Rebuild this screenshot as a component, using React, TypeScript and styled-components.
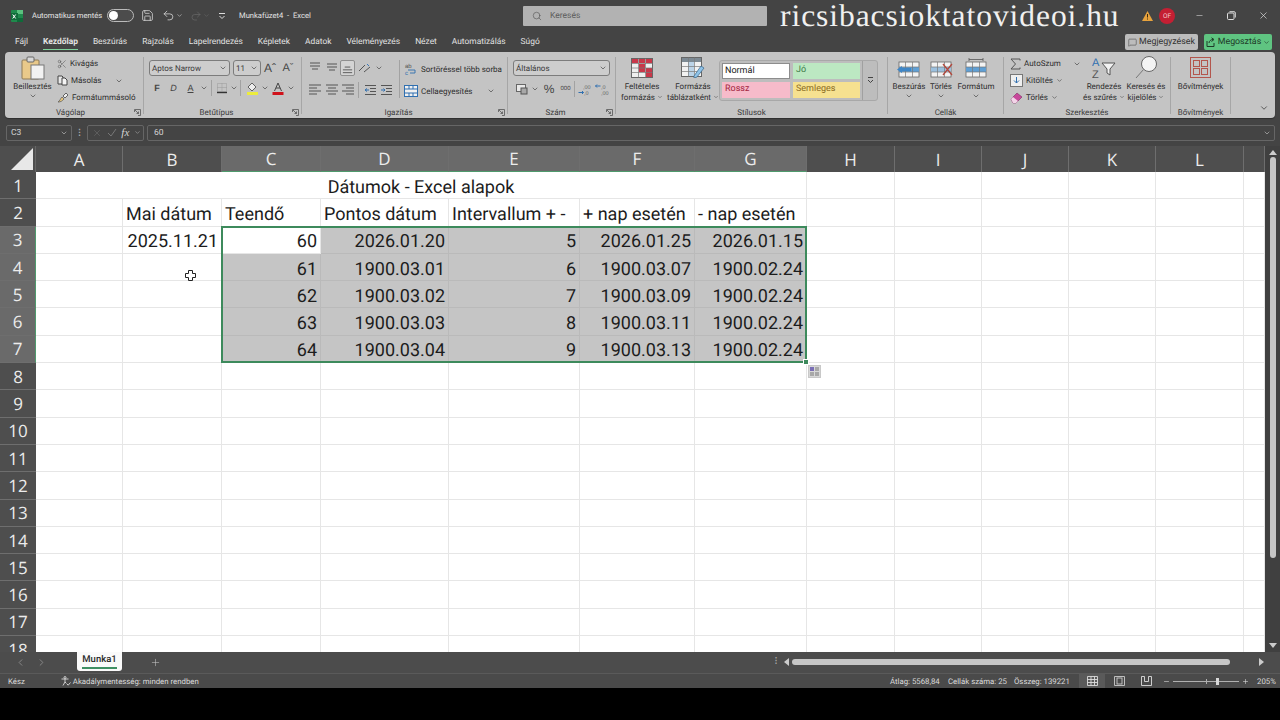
import React from "react";
import styled, { createGlobalStyle } from "styled-components";
import {
  ChevronDown,
  ChevronLeft,
  ChevronRight,
  Minus,
  MessageSquare,
  Plus,
  Redo2,
  Save,
  Scissors,
  Search,
  Undo2,
  X,
} from "lucide-react";

const UI = `Roboto, "Noto Sans", sans-serif`;
const HEAD = `"Open Sans", "Noto Sans", sans-serif`;

const GlobalStyle = createGlobalStyle`
  html, body { margin: 0; padding: 0; background: #000; }
  * { box-sizing: border-box; }
  body { text-rendering: geometricPrecision; }
`;

const Page = styled.div`
  width: 1280px;
  height: 720px;
  background: #000;
  overflow: hidden;
  font-family: ${UI};
`;
const Window = styled.div`
  height: 688px;
  background: #444;
  display: flex;
  flex-direction: column;
`;

/* title bar */
const TitleBar = styled.div`
  height: 31px;
  display: flex;
  align-items: center;
  color: #e4e4e4;
  font-size: 7.6px;
  flex: none;
`;
const TitleItem = styled.div<{ $ml?: number; $w?: number }>`
  margin-left: ${(p) => p.$ml ?? 0}px;
  ${(p) => (p.$w ? `width: ${p.$w}px;` : "")}
  display: flex;
  align-items: center;
  flex: none;
  white-space: nowrap;
`;
const Toggle = styled.div`
  margin-left: 6px;
  width: 27px;
  height: 13px;
  border: 1px solid #bbb;
  border-radius: 7px;
  background: #4c4c4c;
  padding: 1px;
  flex: none;
`;
const ToggleKnob = styled.div`
  width: 9px;
  height: 9px;
  border-radius: 50%;
  background: #fff;
`;
const SearchBox = styled.div`
  margin-left: 210px;
  width: 244px;
  height: 20px;
  background: #b2b2b2;
  border-radius: 1px;
  display: flex;
  align-items: center;
  padding-left: 9px;
  gap: 8px;
  color: #5c5c5c;
  flex: none;
  font-size: 8.5px;
`;
const Watermark = styled.div`
  margin-left: 13px;
  font-family: "Liberation Serif", serif;
  font-size: 31.5px;
  letter-spacing: 0.95px;
  line-height: 31px;
  color: #f0f0f0;
  white-space: nowrap;
  flex: none;
`;
const Avatar = styled.div`
  width: 16px;
  height: 16px;
  border-radius: 50%;
  background: #c41f33;
  color: #f3c6cc;
  font-size: 6.5px;
  display: flex;
  align-items: center;
  justify-content: center;
  margin-left: 6.5px;
  flex: none;
`;

/* tabs */
const TabRow = styled.div`
  height: 21px;
  display: flex;
  align-items: center;
  padding-left: 15px;
  gap: 15px;
  flex: none;
  color: #e2e2e2;
  font-size: 8.4px;
`;
const Tab = styled.div<{ $active?: boolean }>`
  height: 21px;
  line-height: 23px;
  white-space: nowrap;
  font-weight: ${(p) => (p.$active ? 700 : 400)};
  position: relative;
  ${(p) =>
    p.$active
      ? `&::after { content: ""; position: absolute; left: 0; right: 0; bottom: 2px; height: 1.5px; background: #7fd29b; }`
      : ""}
`;
const TabActions = styled.div`
  margin-left: auto;
  margin-right: 8px;
  margin-top: 1px;
  display: flex;
  gap: 6px;
`;
const CommentButton = styled.div`
  width: 73px;
  height: 16px;
  background: #bcbcbc;
  border-radius: 2px;
  color: #333;
  display: flex;
  align-items: center;
  justify-content: center;
  gap: 2px;
  font-size: 8.8px;
`;
const ShareButton = styled(CommentButton)`
  width: 68px;
  background: #5fc481;
  color: #1e3a28;
`;

/* ribbon */
const Ribbon = styled.div`
  height: 66px;
  margin: 0 5px;
  background: #c4c4c4;
  border-radius: 4px;
  display: flex;
  padding-top: 3px;
  color: #2e2e2e;
  font-size: 8px;
  flex: none;
  box-shadow: 0 1px 1px #2e2e2e;
`;
const Group = styled.div<{ $w: number }>`
  width: ${(p) => p.$w}px;
  display: flex;
  flex-direction: column;
  flex: none;
`;
const GroupBody = styled.div<{ $pl?: number }>`
  height: 51px;
  display: flex;
  padding-left: ${(p) => p.$pl ?? 0}px;
`;
const GroupFoot = styled.div<{ $pl?: number }>`
  height: 12px;
  display: flex;
  align-items: center;
  padding-top: 1px;
  padding-left: ${(p) => p.$pl ?? 0}px;
  color: #3a3a3a;
  font-size: 8px;
`;
const GroupName = styled.div`
  flex: 1;
  text-align: center;
`;
const Launcher = styled.div`
  width: 12px;
  height: 8px;
  display: flex;
  justify-content: center;
  align-items: center;
`;
const GroupSep = styled.div`
  width: 1px;
  margin: 2px 0 4px;
  background: #a6a6a6;
  flex: none;
`;
const SmallCol = styled.div<{ $w: number; $ml?: number }>`
  width: ${(p) => p.$w}px;
  margin-left: ${(p) => p.$ml ?? 0}px;
  display: flex;
  flex-direction: column;
  flex: none;
`;
const SmallRow = styled.div<{ $h?: number; $mt?: number }>`
  height: ${(p) => p.$h ?? 17.5}px;
  margin-top: ${(p) => p.$mt ?? 0}px;
  display: flex;
  align-items: center;
  gap: 3px;
  white-space: nowrap;
`;
const RowChevron = styled.div<{ $ml: number }>`
  margin-left: ${(p) => p.$ml}px;
  display: flex;
`;
const BigButton = styled.div<{ $w: number }>`
  width: ${(p) => p.$w}px;
  flex: none;
  display: flex;
  flex-direction: column;
  align-items: center;
  line-height: 11px;
  text-align: center;
  white-space: nowrap;
`;
const BigIcon = styled.div<{ $h?: number }>`
  height: ${(p) => p.$h ?? 25}px;
  margin-bottom: 1px;
  display: flex;
  align-items: center;
  justify-content: center;
`;
const ControlStack = styled.div`
  display: flex;
  flex-direction: column;
  flex: none;
`;
const IconRow = styled.div<{ $mt?: number; $h?: number }>`
  display: flex;
  align-items: center;
  height: ${(p) => p.$h ?? 18}px;
  margin-top: ${(p) => p.$mt ?? 0}px;
`;
const Slot = styled.div<{ $w: number; $active?: boolean }>`
  width: ${(p) => p.$w}px;
  height: 16px;
  display: flex;
  align-items: center;
  justify-content: center;
  flex: none;
  ${(p) =>
    p.$active
      ? "background: #d4d4d4; border: 1px solid #8f8f8f; border-radius: 2px;"
      : ""}
`;
const VSep = styled.div<{ $mx?: number; $h?: number; $mt?: number }>`
  width: 1px;
  height: ${(p) => p.$h ?? 16}px;
  background: #a2a2a2;
  margin: ${(p) => p.$mt ?? 0}px ${(p) => p.$mx ?? 2}px 0;
  flex: none;
`;
const Select = styled.div<{ $w: number; $ml?: number }>`
  width: ${(p) => p.$w}px;
  margin-left: ${(p) => p.$ml ?? 0}px;
  height: 16px;
  border: 1px solid #7c7c7c;
  border-radius: 3px;
  background: #cdcdcd;
  display: flex;
  align-items: center;
  justify-content: space-between;
  padding: 0 2px;
  flex: none;
  color: #3a3a3a;
`;
const BoldLetter = styled.span<{ $b?: boolean; $i?: boolean; $u?: boolean; $size?: number }>`
  font-family: "Liberation Sans", sans-serif;
  font-size: ${(p) => p.$size ?? 9}px;
  font-weight: ${(p) => (p.$b ? 700 : 400)};
  font-style: ${(p) => (p.$i ? "italic" : "normal")};
  text-decoration: ${(p) => (p.$u ? "underline" : "none")};
  color: #444;
`;
const Gallery = styled.div`
  width: 159px;
  height: 41px;
  background: #bdbdbd;
  border: 1px solid #a8a8a8;
  border-radius: 3px;
  margin-top: 5px;
  padding: 2px 0 0 2px;
  display: flex;
  flex: none;
`;
const StyleGrid = styled.div`
  display: grid;
  grid-template-columns: 68px 67px;
  grid-auto-rows: 16px;
  gap: 3px 3px;
  width: 141px;
`;
const StyleCell = styled.div<{ $bg: string; $fg: string; $outlined?: boolean }>`
  background: ${(p) => p.$bg};
  color: ${(p) => p.$fg};
  font-size: 9px;
  padding-left: 3px;
  line-height: 15px;
  ${(p) => (p.$outlined ? "border: 1px solid #8d8d8d; padding-left: 2px;" : "")}
`;
const GalleryScroll = styled.div`
  margin: -2px 0 0 0;
  width: 15px;
  border-left: 1px solid #a0a0a0;
  display: flex;
  align-items: center;
  justify-content: center;
`;
const RibbonEnd = styled.div`
  flex: 1;
  display: flex;
  justify-content: flex-end;
  align-items: flex-end;
  padding: 0 6px 5px 0;
`;

/* formula bar */
const FormulaBar = styled.div`
  height: 17px;
  margin-top: 6px;
  display: flex;
  padding: 0 5px 0 6px;
  align-items: center;
  color: #d6d6d6;
  font-size: 8.5px;
  flex: none;
`;
const NameBox = styled.div`
  width: 66px;
  height: 16px;
  border: 1px solid #666;
  border-radius: 2px;
  display: flex;
  align-items: center;
  justify-content: space-between;
  padding: 0 3px 0 4px;
  flex: none;
`;
const FormulaDots = styled.div`
  width: 15px;
  text-align: center;
  flex: none;
  font-weight: 700;
  color: #aaa;
`;
const FxBox = styled(NameBox)`
  width: 57px;
  padding: 0 2px 0 4px;
  color: #777;
`;
const FxLabel = styled.span`
  font-family: "Liberation Serif", serif;
  font-style: italic;
  font-size: 11px;
  color: #d8d8d8;
`;
const FormulaInput = styled(NameBox)`
  flex: 1;
  width: auto;
  margin-left: 3px;
  padding: 0 3px 0 6px;
`;

/* sheet */
const SheetArea = styled.div`
  height: 506px;
  margin-top: 5px;
  display: flex;
  flex: none;
`;
const GridWrap = styled.div`
  width: 1265px;
  height: 506px;
  position: relative;
  overflow: hidden;
  background: #fff;
  flex: none;
`;
const CellGrid = styled.div<{ $cols: string; $rowH: number }>`
  display: grid;
  grid-template-columns: ${(p) => p.$cols};
  grid-template-rows: 26px;
  grid-auto-rows: ${(p) => p.$rowH}px;
  font-family: Roboto, "Liberation Sans", sans-serif;
  font-size: 18px;
  color: #1c1c1c;
`;
const Corner = styled.div`
  background: #4e4e4e;
  border-right: 1px solid #666;
  display: flex;
  align-items: flex-end;
  justify-content: flex-end;
  padding: 0 2px 2px 0;
`;
const Header = styled.div<{ $sel?: boolean }>`
  background: ${(p) => (p.$sel ? "#6a6a6a" : "#4e4e4e")};
  color: #ececec;
  font-family: ${HEAD};
  font-size: 17px;
  display: flex;
  align-items: center;
  justify-content: center;
`;
const ColHeader = styled(Header)`
  border-right: 1px solid #6e6e6e;
  ${(p) => (p.$sel ? "border-bottom: 1px solid #4f9a6d;" : "")}
`;
const RowHeader = styled(Header)`
  border-bottom: 1px solid #6e6e6e;
  ${(p) => (p.$sel ? "border-right: 1px solid #4f9a6d;" : "")}
`;
const Cell = styled.div<{ $sel?: boolean; $right?: boolean; $span?: number; $center?: boolean }>`
  ${(p) => (p.$span ? `grid-column: span ${p.$span};` : "")}
  background: ${(p) => (p.$sel ? "#c5c5c5" : "#fff")};
  border-right: 1px solid ${(p) => (p.$sel ? "#bababa" : "#e6e6e6")};
  border-bottom: 1px solid ${(p) => (p.$sel ? "#bababa" : "#e6e6e6")};
  display: flex;
  align-items: center;
  justify-content: ${(p) => (p.$center ? "center" : p.$right ? "flex-end" : "flex-start")};
  padding: 4px 3px 0;
  white-space: nowrap;
  overflow: visible;
`;
const Selection = styled.div`
  position: absolute;
  border: 2px solid #3d8a5c;
  pointer-events: none;
`;
const FillHandle = styled.div`
  position: absolute;
  right: -4px;
  bottom: -4px;
  width: 6px;
  height: 6px;
  background: #3d8a5c;
  border: 1px solid #fff;
`;
const QuickAnalysis = styled.div`
  position: absolute;
  left: 808px;
  top: 219px;
  width: 13px;
  height: 13px;
  background: #d8d8d8;
  border: 1px solid #c8c8c8;
  display: flex;
  align-items: center;
  justify-content: center;
`;
const CursorMark = styled.div`
  position: absolute;
  left: 185px;
  top: 124px;
  width: 11px;
  height: 11px;
  display: flex;
`;
const VScroll = styled.div`
  width: 15px;
  background: #404040;
  display: flex;
  flex-direction: column;
  align-items: center;
  padding-top: 4px;
  flex: none;
`;
const VThumb = styled.div`
  width: 6px;
  height: 401px;
  margin-top: 2px;
  background: #c6c6c6;
  border-radius: 3px;
`;
const VDown = styled.div`
  margin-top: auto;
  margin-bottom: 4px;
  display: flex;
`;

/* sheet tabs */
const SheetTabs = styled.div`
  height: 21px;
  background: #4c4c4c;
  display: flex;
  align-items: flex-start;
  color: #9a9a9a;
  flex: none;
`;
const NavArrows = styled.div`
  width: 77px;
  height: 20px;
  padding-left: 15px;
  display: flex;
  align-items: center;
  gap: 10px;
  flex: none;
`;
const SheetTab = styled.div`
  width: 45px;
  height: 19px;
  background: #fafafa;
  border-radius: 0 0 3px 3px;
  color: #2a2a2a;
  font-size: 9.5px;
  font-weight: 500;
  text-align: center;
  line-height: 16px;
  position: relative;
  flex: none;
  &::after {
    content: "";
    position: absolute;
    left: 5px;
    right: 5px;
    bottom: 2px;
    height: 2px;
    background: #3f8f63;
  }
`;
const AddSheet = styled.div`
  margin-left: 28px;
  height: 20px;
  display: flex;
  align-items: center;
  flex: none;
`;
const TabSplitter = styled.div`
  margin-left: 609px;
  width: 12px;
  height: 20px;
  color: #aaa;
  font-size: 8px;
  text-align: center;
  line-height: 18px;
  font-weight: 700;
  flex: none;
`;
const HScroll = styled.div`
  width: 490px;
  height: 20px;
  display: flex;
  align-items: center;
  padding-left: 2px;
  flex: none;
`;
const HThumb = styled.div`
  width: 438px;
  height: 6px;
  margin-left: 3px;
  background: #c6c6c6;
  border-radius: 3px;
  flex: none;
`;
const HRight = styled.div`
  margin-left: 29px;
  display: flex;
`;

/* status bar */
const StatusBar = styled.div`
  height: 15px;
  background: #4a4a4a;
  border-top: 1px solid #5a5a5a;
  display: flex;
  align-items: center;
  color: #dcdcdc;
  font-size: 7.8px;
  padding: 0 5px 0 8px;
  flex: none;
  white-space: nowrap;
`;
const StatusItem = styled.div<{ $ml?: number; $w?: number }>`
  margin-left: ${(p) => p.$ml ?? 0}px;
  ${(p) => (p.$w ? `width: ${p.$w}px;` : "")}
  display: flex;
  flex: none;
`;
const StatusRight = styled.div`
  margin-left: auto;
  display: flex;
  align-items: center;
  flex: none;
`;
const ViewButton = styled.div<{ $active?: boolean }>`
  margin-right: 1px;
  width: 26px;
  height: 14px;
  display: flex;
  align-items: center;
  justify-content: center;
  flex: none;
  ${(p) => (p.$active ? "background: #5a5a5a;" : "")}
`;
const ZoomTrack = styled.div`
  width: 66px;
  height: 1px;
  background: #b0b0b0;
  position: relative;
  margin: 0 3px;
  flex: none;
`;
const ZoomTick = styled.div`
  position: absolute;
  left: 33px;
  top: -2px;
  width: 1px;
  height: 5px;
  background: #b0b0b0;
`;
const ZoomThumb = styled.div`
  position: absolute;
  left: 43px;
  top: -3px;
  width: 3px;
  height: 7px;
  background: #d8d8d8;
`;

/* drawings */
const Chev = ({ c = "#444", s = 8 }: { c?: string; s?: number }) => (
  <ChevronDown size={s} color={c} strokeWidth={2} />
);

const ExcelLogo = () => (
  <svg width="12" height="12" viewBox="0 0 12 12">
    <rect width="12" height="12" rx="1" fill="#1f8a4c" />
    <rect x="6" width="6" height="4" fill="#5bc27f" />
    <rect x="6" y="8" width="6" height="4" fill="#0f6a39" />
    <rect y="3" width="7" height="7" fill="#106c3a" />
    <path d="M1.7 4.5l3 4M4.7 4.5l-3 4" stroke="#fff" strokeWidth="1" />
  </svg>
);
const PasteIcon = () => (
  <svg width="28" height="24" viewBox="0 0 28 24">
    <rect x="3" y="4" width="17" height="19" rx="1" fill="#e9c98a" stroke="#8d7a58" />
    <rect x="8" y="1" width="7" height="5" rx="1" fill="#d8d8d8" stroke="#666" />
    <rect x="12" y="9" width="13" height="14" fill="#f2f2f2" stroke="#777" />
  </svg>
);
const CopyIcon = () => (
  <svg width="11" height="11" viewBox="0 0 11 11" fill="none" stroke="#444">
    <path d="M1 1h4l1 1v7H1z" fill="#e8e8e8" />
    <path d="M5 3h3l2 2v5H5z" fill="#f4f4f4" />
  </svg>
);
const BrushIcon = () => (
  <svg width="12" height="11" viewBox="0 0 12 11">
    <path d="M1 10c2-1 2-3 4-5l2 2c-2 2-3 3-6 3z" fill="#e8c77c" stroke="#555" strokeWidth=".7" />
    <path d="M6 4l3-3 2 2-3 3z" fill="#f0f0f0" stroke="#444" strokeWidth=".8" />
  </svg>
);
const BorderIcon = () => (
  <svg width="12" height="12" viewBox="0 0 12 12" fill="none" stroke="#9a9a9a">
    <path d="M1.5 1.5h9v8h-9zM6 1.5v8M1.5 5.5h9" strokeDasharray="1 1" />
    <path d="M1 10.5h10" stroke="#333" strokeWidth="1.4" />
  </svg>
);
const FillIcon = () => (
  <svg width="13" height="13" viewBox="0 0 13 13">
    <path d="M6 1l4 4-4 4-4-4z" fill="#eee" stroke="#444" strokeWidth=".8" />
    <rect x="1" y="10" width="11" height="3" fill="#ecec3c" />
  </svg>
);
const FontColorIcon = () => (
  <svg width="12" height="13" viewBox="0 0 12 13">
    <path d="M2.5 9L6 1l3.5 8M4 6h4" fill="none" stroke="#444" />
    <rect x="0.5" y="10" width="11" height="3" fill="#d0121b" />
  </svg>
);
const Lines = ({ kind }: { kind: "top" | "mid" | "bot" | "l" | "c" | "r" }) => {
  const d = {
    top: "M2 2h10M2 5h10M4 8h6",
    mid: "M2 3h10M2 6h10M4 9h6",
    bot: "M4 6h6M2 9h10M2 12h10",
    l: "M1 2h12M1 5h8M1 8h12M1 11h8",
    c: "M1 2h12M3 5h8M1 8h12M3 11h8",
    r: "M1 2h12M5 5h8M1 8h12M5 11h8",
  }[kind];
  return (
    <svg width="14" height="14" viewBox="0 0 14 14" fill="none" stroke="#555" strokeWidth="1">
      <path d={d} />
    </svg>
  );
};
const OrientIcon = () => (
  <svg width="13" height="12" viewBox="0 0 13 12" fill="none" stroke="#555">
    <path d="M1 9l6-6M6 10l6-5" />
    <path d="M9 2l2 2" stroke="#3a78b8" />
  </svg>
);
const IndentIcon = ({ out }: { out?: boolean }) => (
  <svg width="13" height="12" viewBox="0 0 13 12" fill="none" stroke="#555">
    <path d="M1 1.5h11M6 4.5h6M6 7.5h6M1 10.5h11" />
    <path d={out ? "M5 6H1m2-1.5L1 6l2 1.5" : "M1 6h4M3.5 4.5L5 6 3.5 7.5"} stroke="#2f6fb0" />
  </svg>
);
const WrapIcon = () => (
  <svg width="14" height="14" viewBox="0 0 14 14">
    <text x="1" y="6" fontSize="6" fill="#555" fontFamily="Liberation Sans">ab</text>
    <text x="1" y="13" fontSize="6" fill="#2f6fb0" fontFamily="Liberation Sans">c</text>
    <path d="M6 11h5V8H4" fill="none" stroke="#2f6fb0" strokeWidth=".9" />
  </svg>
);
const MergeIcon = () => (
  <svg width="14" height="12" viewBox="0 0 14 12" fill="#f0f0f0" stroke="#2f6fb0">
    <rect x=".5" y=".5" width="13" height="11" />
    <path d="M.5 4h13M.5 8h13M5 .5V4M9 .5V4M5 8v3.5M9 8v3.5" fill="none" />
  </svg>
);
const MoneyIcon = () => (
  <svg width="13" height="12" viewBox="0 0 13 12" fill="none" stroke="#666">
    <rect x=".5" y="1.5" width="9" height="7" fill="#e8e8e8" />
    <rect x="5" y="5" width="6" height="6" fill="#a8a8a8" stroke="#555" />
  </svg>
);
const DecimalIcon = ({ dec }: { dec?: boolean }) => (
  <svg width="14" height="13" viewBox="0 0 14 13">
    <text x={dec ? 5 : 6} y="5.5" fontSize="5.5" fill="#666" fontFamily="Liberation Sans">{dec ? ",00" : ",0"}</text>
    <text x="6" y="12" fontSize="5.5" fill="#666" fontFamily="Liberation Sans">{dec ? ",0" : ",00"}</text>
    <path d={dec ? "M0.5 9.5h5m-1.5-1.5l1.5 1.5L4 11" : "M5.5 3h-5M2 1.5L.5 3 2 4.5"} stroke="#2f6fb0" fill="none" />
  </svg>
);
const CondFormatIcon = () => (
  <svg width="22" height="20" viewBox="0 0 22 20">
    <rect x=".5" y=".5" width="21" height="19" fill="#efefef" stroke="#666" />
    <rect x="1" y="1" width="6" height="4" fill="#c8384a" />
    <rect x="8" y="1" width="6" height="4" fill="#c8384a" />
    <rect x="15" y="1" width="6" height="4" fill="#c8384a" />
    <rect x="8" y="6" width="6" height="8" fill="#c8384a" />
    <rect x="15" y="10" width="6" height="9" fill="#c8384a" />
    <path d="M.5 5.5h21M.5 10h21M.5 14.5h21M7.500.5v19M14.500.5v19" stroke="#777" fill="none" strokeWidth=".7" />
  </svg>
);
const TableFormatIcon = () => (
  <svg width="24" height="21" viewBox="0 0 24 21">
    <rect x=".5" y=".5" width="20" height="19" fill="#f2f2f2" stroke="#666" />
    <rect x="1" y="1" width="19" height="4" fill="#7d8a94" />
    <rect x="7" y="5" width="6" height="14" fill="#bcd4e8" />
    <path d="M.5 9.500h20M.5 14.500h20M7.500.5v19M13.500.5v19" stroke="#7a7a7a" fill="none" strokeWidth=".7" />
    <path d="M13 19l7-10 3 2-7 9-3 1z" fill="#8fc3e8" stroke="#36648a" strokeWidth=".7" />
  </svg>
);
const CellsIcon = ({ variant }: { variant: "ins" | "del" | "fmt" }) => (
  <svg width="24" height="22" viewBox="0 0 24 22">
    <g transform="translate(2 5)">
      <rect width="20" height="15" fill="#f3f3f3" stroke="#666" strokeWidth=".8" />
      <rect y="5" width="20" height="5" fill={variant === "del" ? "#9cc0de" : "#5f9fd4"} />
      <path d="M0 5h20M0 10h20M6.500 0v15M13.500 0v15" stroke="#777" strokeWidth=".7" fill="none" />
    </g>
    {variant === "ins" && <path d="M0 12.500L5 9v2h9v3H5v2z" fill="#3f86c6" />}
    {variant === "del" && <path d="M14 7l9 11M23 7l-9 11" stroke="#b3483d" strokeWidth="1.3" />}
    {variant === "fmt" && <path d="M5 2.500h14M5 1v3M19 1v3" stroke="#555" strokeWidth=".8" />}
  </svg>
);
const SigmaIcon = () => (
  <svg width="11" height="12" viewBox="0 0 11 12" fill="none" stroke="#555">
    <path d="M10 2.500V1H1l4.500 5L1 11h9V9.500" />
  </svg>
);
const FillDownIcon = () => (
  <svg width="13" height="13" viewBox="0 0 13 13">
    <rect x=".5" y=".5" width="12" height="12" fill="#efefef" stroke="#777" />
    <path d="M6.500 3v6M4 6.500L6.500 9 9 6.500" fill="none" stroke="#2f6fb0" />
  </svg>
);
const EraserIcon = () => (
  <svg width="13" height="12" viewBox="0 0 13 12">
    <path d="M1 7l6-6 5 4-6 6H3z" fill="#c8479b" stroke="#7d2b62" strokeWidth=".6" />
    <path d="M1 7l2-2 5 4-2 2H3z" fill="#f2d5e8" />
  </svg>
);
const SortIcon = () => (
  <svg width="24" height="25" viewBox="0 0 24 25">
    <text x="0" y="11" fontSize="11" fill="#2f6fb0" fontFamily="Liberation Sans">A</text>
    <text x="0" y="23" fontSize="11" fill="#555" fontFamily="Liberation Sans">Z</text>
    <path d="M10 8h13l-5 6v6l-3-2v-4z" fill="#f2f2f2" stroke="#555" />
  </svg>
);
const FindIcon = () => (
  <svg width="24" height="25" viewBox="0 0 24 25">
    <circle cx="15" cy="9" r="7.500" fill="#f4f4f4" stroke="#666" />
    <path d="M9.500 14.500L2 23" stroke="#777" strokeWidth="1" />
  </svg>
);
const AddinIcon = () => (
  <svg width="21" height="21" viewBox="0 0 21 21" fill="none" stroke="#b3564d">
    <rect x=".5" y=".5" width="20" height="20" />
    <rect x="3.500" y="3.500" width="6" height="6" />
    <rect x="11.500" y="3.500" width="6" height="6" />
    <rect x="3.500" y="11.500" width="6" height="6" />
    <rect x="11.500" y="11.500" width="6" height="6" />
  </svg>
);
const LauncherIcon = () => (
  <svg width="7" height="7" viewBox="0 0 7 7" fill="none" stroke="#555" strokeWidth=".8">
    <path d="M.5 3V.5H6.500V6.500H4M1 1l3.500 3.500M4.500 2.500v2h-2" />
  </svg>
);
const ScrollMoreIcon = () => (
  <svg width="7" height="9" viewBox="0 0 7 9" fill="none" stroke="#444">
    <path d="M1 1.500h5M1 4l2.500 2.500L6 4" />
  </svg>
);
const CustomizeIcon = () => (
  <svg width="8" height="8" viewBox="0 0 8 8" fill="none" stroke="#ddd">
    <path d="M1 1.500h6M1.500 4L4 6.500 6.500 4" />
  </svg>
);
const WarnIcon = () => (
  <svg width="11" height="10" viewBox="0 0 11 10">
    <path d="M5.500 0L11 10H0z" fill="#e8a33d" />
    <path d="M5.500 3v3.500M5.500 7.500v1" stroke="#3a2a10" strokeWidth="1" />
  </svg>
);
const RestoreIcon = () => (
  <svg width="9" height="9" viewBox="0 0 9 9" fill="none" stroke="#ddd">
    <rect x=".5" y="2" width="6.500" height="6.500" rx="1" />
    <path d="M2.500 .7h4.500a1.300 1.300 0 0 1 1.300 1.300v4.500" />
  </svg>
);
const ShareIcon = () => (
  <svg width="10" height="10" viewBox="0 0 10 10" fill="none" stroke="#1e3a28">
    <path d="M1 4v5.500h7V6M3 6c0-2 2-3.500 4-3.500M5.500 .8L8 2.500 5.500 4.500" />
  </svg>
);
const AccessIcon = () => (
  <svg width="10" height="10" viewBox="0 0 10 10" fill="none" stroke="#ddd" strokeWidth=".9">
    <circle cx="4" cy="1.500" r="1" />
    <path d="M.5 3h7M4 3v3L2 9.500M4 6l1.500 1.500M6 8l1.200 1.200L9.500 6.500" />
  </svg>
);
const CornerTriangle = () => (
  <svg width="22" height="22" viewBox="0 0 22 22">
    <path d="M22 0v22H0z" fill="#e8e8e8" />
  </svg>
);
const PlusCursor = () => (
  <svg width="11" height="11" viewBox="0 0 11 11">
    <path d="M3.500 .5h4v3h3v4h-3v3h-4v-3h-3v-4h3z" fill="#fff" stroke="#222" />
  </svg>
);
const QuickIcon = () => (
  <svg width="9" height="9" viewBox="0 0 9 9">
    <rect width="4" height="4" fill="#7a6fb5" />
    <rect x="5" width="4" height="4" fill="#a8a8a8" />
    <rect y="5" width="4" height="4" fill="#a8a8a8" />
    <rect x="5" y="5" width="4" height="4" fill="#a8a8a8" />
  </svg>
);
const UpTri = () => (
  <svg width="8" height="5" viewBox="0 0 8 5"><path d="M4 0l4 5H0z" fill="#ccc" /></svg>
);
const DownTri = () => (
  <svg width="8" height="5" viewBox="0 0 8 5"><path d="M0 0h8L4 5z" fill="#ccc" /></svg>
);
const LeftTri = () => (
  <svg width="5" height="8" viewBox="0 0 5 8"><path d="M5 0v8L0 4z" fill="#ccc" /></svg>
);
const RightTri = () => (
  <svg width="5" height="8" viewBox="0 0 5 8"><path d="M0 0v8l5-4z" fill="#ccc" /></svg>
);
const NormalViewIcon = () => (
  <svg width="11" height="10" viewBox="0 0 11 10" fill="none" stroke="#ddd" strokeWidth=".9">
    <path d="M.5.5h10v9H.5zM.5 3.500h10M.5 6.500h10M4 .5v9M7.500.5v9" />
  </svg>
);
const PageLayoutIcon = () => (
  <svg width="11" height="10" viewBox="0 0 11 10" fill="none" stroke="#ccc" strokeWidth=".9">
    <path d="M.5.5h10v9H.5z" />
    <rect x="3" y="2" width="5" height="6" />
  </svg>
);
const BreakViewIcon = () => (
  <svg width="11" height="10" viewBox="0 0 11 10" fill="none" stroke="#ddd" strokeWidth=".9">
    <path d="M.5.5h3v5h4V.5h3v9h-10z" />
  </svg>
);

/* sheet data */
const colWidths = [36, 87, 99, 99, 128, 131, 115, 112, 88, 87, 87, 87, 88, 21];
const colLetters = ["A", "B", "C", "D", "E", "F", "G", "H", "I", "J", "K", "L", ""];
const ROW_H = 27.3;
const FIRST_SEL_COL = 2;
const LAST_SEL_COL = 6;

const table: Record<number, string[]> = {
  3: ["60", "2026.01.20", "5", "2026.01.25", "2026.01.15"],
  4: ["61", "1900.03.01", "6", "1900.03.07", "1900.02.24"],
  5: ["62", "1900.03.02", "7", "1900.03.09", "1900.02.24"],
  6: ["63", "1900.03.03", "8", "1900.03.11", "1900.02.24"],
  7: ["64", "1900.03.04", "9", "1900.03.13", "1900.02.24"],
};
const headings: Record<number, string> = {
  1: "Mai dátum",
  2: "Teendő",
  3: "Pontos dátum",
  4: "Intervallum + -",
  5: "+ nap esetén",
  6: "- nap esetén",
};

const tabs = ["Fájl", "Kezdőlap", "Beszúrás", "Rajzolás", "Lapelrendezés", "Képletek", "Adatok", "Véleményezés", "Nézet", "Automatizálás", "Súgó"];

const renderRow = (row: number) => {
  const cells: React.ReactNode[] = [];
  const selRow = row >= 3 && row <= 7;
  cells.push(
    <RowHeader key={`h${row}`} $sel={selRow}>
      {row}
    </RowHeader>
  );
  if (row === 1) {
    cells.push(
      <Cell key="title" $span={7} $center>
        Dátumok - Excel alapok
      </Cell>
    );
  }
  colLetters.forEach((_, c) => {
    if (row === 1 && c < 7) return;
    const inSel = selRow && c >= FIRST_SEL_COL && c <= LAST_SEL_COL;
    let text = "";
    let right = false;
    if (row === 2 && headings[c]) text = headings[c];
    if (row === 3 && c === 1) {
      text = "2025.11.21";
      right = true;
    }
    if (inSel) {
      text = table[row][c - FIRST_SEL_COL];
      right = true;
    }
    const active = row === 3 && c === FIRST_SEL_COL;
    cells.push(
      <Cell key={`${row}-${c}`} $sel={inSel && !active} $right={right}>
        {text}
      </Cell>
    );
  });
  return cells;
};

export default function App() {
  const rows = Array.from({ length: 18 }, (_, i) => i + 1);
  return (
    <Page>
      <GlobalStyle />
      <Window>
        <TitleBar>
          <TitleItem $ml={11}><ExcelLogo /></TitleItem>
          <TitleItem $ml={9} $w={69}>Automatikus mentés</TitleItem>
          <Toggle><ToggleKnob /></Toggle>
          <TitleItem $ml={7}><Save size={13} color="#ddd" strokeWidth={1.4} /></TitleItem>
          <TitleItem $ml={8}><Undo2 size={13} color="#ddd" strokeWidth={1.4} /></TitleItem>
          <TitleItem $ml={1}><Chev c="#ccc" s={7} /></TitleItem>
          <TitleItem $ml={7}><Redo2 size={12} color="#686868" strokeWidth={1.4} /></TitleItem>
          <TitleItem $ml={1}><Chev c="#666" s={7} /></TitleItem>
          <TitleItem $ml={8}><CustomizeIcon /></TitleItem>
          <TitleItem $ml={13} $w={74}>Munkafüzet4&nbsp; -&nbsp; Excel</TitleItem>
          <SearchBox>
            <Search size={10} color="#555" strokeWidth={1.5} />
            Keresés
          </SearchBox>
          <Watermark>ricsibacsioktatovideoi.hu</Watermark>
          <TitleItem $ml={22}><WarnIcon /></TitleItem>
          <Avatar>OF</Avatar>
          <TitleItem $ml={19.5}><Minus size={9} color="#ddd" strokeWidth={1.5} /></TitleItem>
          <TitleItem $ml={23}><RestoreIcon /></TitleItem>
          <TitleItem $ml={22}><X size={11} color="#ddd" strokeWidth={1.5} /></TitleItem>
        </TitleBar>

        <TabRow>
          {tabs.map((t) => (
            <Tab key={t} $active={t === "Kezdőlap"}>
              {t}
            </Tab>
          ))}
          <TabActions>
            <CommentButton>
              <MessageSquare size={9} strokeWidth={1.3} color="#333" />
              Megjegyzések
            </CommentButton>
            <ShareButton>
              <ShareIcon />
              Megosztás
              <Chev c="#1e3a28" s={7} />
            </ShareButton>
          </TabActions>
        </TabRow>

        <Ribbon>
          <Group $w={138}>
            <GroupBody $pl={4}>
              <BigButton $w={47}>
                <BigIcon $h={25}><PasteIcon /></BigIcon>
                Beillesztés
                <Chev />
              </BigButton>
              <SmallCol $w={80} $ml={1}>
                <SmallRow><Scissors size={10} color="#555" strokeWidth={1.3} />Kivágás</SmallRow>
                <SmallRow><CopyIcon />Másolás<RowChevron $ml={11}><Chev /></RowChevron></SmallRow>
                <SmallRow><BrushIcon />Formátummásoló</SmallRow>
              </SmallCol>
            </GroupBody>
            <GroupFoot $pl={5}>
              <GroupName>Vágólap</GroupName>
              <Launcher><LauncherIcon /></Launcher>
            </GroupFoot>
          </Group>
          <GroupSep />

          <Group $w={157}>
            <GroupBody $pl={5}>
              <ControlStack>
                <IconRow $mt={5} $h={16}>
                  <Select $w={81}>Aptos Narrow<Chev /></Select>
                  <Select $w={28} $ml={3}>11<Chev /></Select>
                  <Slot $w={18}><BoldLetter $size={12}>Aˆ</BoldLetter></Slot>
                  <Slot $w={18}><BoldLetter $size={11}>Aˇ</BoldLetter></Slot>
                </IconRow>
                <IconRow $mt={3}>
                  <Slot $w={16}><BoldLetter $b>F</BoldLetter></Slot>
                  <Slot $w={17}><BoldLetter $i>D</BoldLetter></Slot>
                  <Slot $w={17}><BoldLetter $u>A</BoldLetter></Slot>
                  <Slot $w={10}><Chev /></Slot>
                  <VSep />
                  <Slot $w={16}><BorderIcon /></Slot>
                  <Slot $w={8}><Chev /></Slot>
                  <VSep />
                  <Slot $w={18}><FillIcon /></Slot>
                  <Slot $w={8}><Chev /></Slot>
                  <Slot $w={18}><FontColorIcon /></Slot>
                  <Slot $w={8}><Chev /></Slot>
                </IconRow>
              </ControlStack>
            </GroupBody>
            <GroupFoot>
              <GroupName>Betűtípus</GroupName>
              <Launcher><LauncherIcon /></Launcher>
            </GroupFoot>
          </Group>
          <GroupSep />

          <Group $w={205}>
            <GroupBody $pl={5}>
              <ControlStack>
                <IconRow $mt={4} $h={18}>
                  <Slot $w={16}><Lines kind="top" /></Slot>
                  <Slot $w={17}><Lines kind="mid" /></Slot>
                  <Slot $w={15} $active><Lines kind="bot" /></Slot>
                  <Slot $w={19}><OrientIcon /></Slot>
                  <Slot $w={9}><Chev /></Slot>
                </IconRow>
                <IconRow $mt={4}>
                  <Slot $w={16}><Lines kind="l" /></Slot>
                  <Slot $w={17}><Lines kind="c" /></Slot>
                  <Slot $w={15}><Lines kind="r" /></Slot>
                  <VSep $mx={3} />
                  <Slot $w={16}><IndentIcon out /></Slot>
                  <Slot $w={17}><IndentIcon /></Slot>
                </IconRow>
              </ControlStack>
              <VSep $mx={4} $h={38} $mt={5} />
              <SmallCol $w={100}>
                <SmallRow $h={22} $mt={3}><WrapIcon />Sortöréssel több sorba</SmallRow>
                <SmallRow $h={22}><MergeIcon />Cellaegyesítés<RowChevron $ml={11}><Chev /></RowChevron></SmallRow>
              </SmallCol>
            </GroupBody>
            <GroupFoot>
              <GroupName>Igazítás</GroupName>
              <Launcher><LauncherIcon /></Launcher>
            </GroupFoot>
          </Group>
          <GroupSep />

          <Group $w={107}>
            <GroupBody $pl={5}>
              <ControlStack>
                <IconRow $mt={5} $h={16}>
                  <Select $w={97}>Általános<Chev /></Select>
                </IconRow>
                <IconRow $mt={4}>
                  <Slot $w={18}><MoneyIcon /></Slot>
                  <Slot $w={8}><Chev /></Slot>
                  <Slot $w={20}><BoldLetter $size={12}>%</BoldLetter></Slot>
                  <Slot $w={13}><BoldLetter $size={6}>000</BoldLetter></Slot>
                  <VSep />
                  <Slot $w={16}><DecimalIcon dec /></Slot>
                  <Slot $w={18}><DecimalIcon /></Slot>
                </IconRow>
              </ControlStack>
            </GroupBody>
            <GroupFoot>
              <GroupName>Szám</GroupName>
              <Launcher><LauncherIcon /></Launcher>
            </GroupFoot>
          </Group>
          <GroupSep />

          <Group $w={271}>
            <GroupBody $pl={1}>
              <BigButton $w={50}>
                <BigIcon><CondFormatIcon /></BigIcon>
                Feltételes
                <span>formázás <Chev s={6} /></span>
              </BigButton>
              <BigButton $w={52}>
                <BigIcon><TableFormatIcon /></BigIcon>
                Formázás
                <span>táblázatként <Chev s={6} /></span>
              </BigButton>
              <Gallery>
                <StyleGrid>
                  <StyleCell $bg="#fff" $fg="#222" $outlined>Normál</StyleCell>
                  <StyleCell $bg="#bce8c2" $fg="#3f7d4a">Jó</StyleCell>
                  <StyleCell $bg="#f6bbca" $fg="#a3263f">Rossz</StyleCell>
                  <StyleCell $bg="#f6e190" $fg="#8a6a1e">Semleges</StyleCell>
                </StyleGrid>
                <GalleryScroll><ScrollMoreIcon /></GalleryScroll>
              </Gallery>
            </GroupBody>
            <GroupFoot>
              <GroupName>Stílusok</GroupName>
            </GroupFoot>
          </Group>
          <GroupSep />

          <Group $w={115}>
            <GroupBody $pl={4}>
              <BigButton $w={34}>
                <BigIcon><CellsIcon variant="ins" /></BigIcon>
                Beszúrás
                <Chev />
              </BigButton>
              <BigButton $w={30}>
                <BigIcon><CellsIcon variant="del" /></BigIcon>
                Törlés
                <Chev />
              </BigButton>
              <BigButton $w={40}>
                <BigIcon><CellsIcon variant="fmt" /></BigIcon>
                Formátum
                <Chev />
              </BigButton>
            </GroupBody>
            <GroupFoot>
              <GroupName>Cellák</GroupName>
            </GroupFoot>
          </Group>
          <GroupSep />

          <Group $w={166}>
            <GroupBody $pl={6}>
              <SmallCol $w={73}>
                <SmallRow><SigmaIcon />AutoSzum<RowChevron $ml={9}><Chev /></RowChevron></SmallRow>
                <SmallRow><FillDownIcon />Kitöltés<Chev s={7} /></SmallRow>
                <SmallRow><EraserIcon />Törlés<Chev s={7} /></SmallRow>
              </SmallCol>
              <BigButton $w={42}>
                <BigIcon><SortIcon /></BigIcon>
                Rendezés
                <span>és szűrés <Chev s={6} /></span>
              </BigButton>
              <BigButton $w={42}>
                <BigIcon><FindIcon /></BigIcon>
                Keresés és
                <span>kijelölés <Chev s={6} /></span>
              </BigButton>
            </GroupBody>
            <GroupFoot>
              <GroupName>Szerkesztés</GroupName>
            </GroupFoot>
          </Group>
          <GroupSep />

          <Group $w={59}>
            <GroupBody>
              <BigButton $w={59}>
                <BigIcon><AddinIcon /></BigIcon>
                Bővítmények
              </BigButton>
            </GroupBody>
            <GroupFoot>
              <GroupName>Bővítmények</GroupName>
            </GroupFoot>
          </Group>
          <GroupSep />
          <RibbonEnd><Chev s={10} c="#444" /></RibbonEnd>
        </Ribbon>

        <FormulaBar>
          <NameBox>C3<Chev c="#bbb" /></NameBox>
          <FormulaDots>⋮</FormulaDots>
          <FxBox>
            <X size={10} color="#777" strokeWidth={1.2} />
            <svg width="10" height="9" viewBox="0 0 10 9" fill="none" stroke="#777"><path d="M1 5l3 3 5-7" /></svg>
            <FxLabel>fx</FxLabel>
            <Chev c="#aaa" s={7} />
          </FxBox>
          <FormulaInput>60<Chev c="#bbb" /></FormulaInput>
        </FormulaBar>

        <SheetArea>
          <GridWrap>
            <CellGrid $cols={colWidths.map((w) => `${w}px`).join(" ")} $rowH={ROW_H}>
              <Corner><CornerTriangle /></Corner>
              {colLetters.map((l, c) => (
                <ColHeader key={c} $sel={c >= FIRST_SEL_COL && c <= LAST_SEL_COL}>
                  {l}
                </ColHeader>
              ))}
              {rows.map(renderRow)}
            </CellGrid>
            <Selection
              style={{
                left: colWidths.slice(0, 3).reduce((a, b) => a + b, 0) - 1,
                top: 26 + ROW_H * 2 - 1,
                width: colWidths.slice(3, 8).reduce((a, b) => a + b, 0) + 1,
                height: ROW_H * 5 + 1,
              }}
            >
              <FillHandle />
            </Selection>
            <QuickAnalysis><QuickIcon /></QuickAnalysis>
            <CursorMark><PlusCursor /></CursorMark>
          </GridWrap>
          <VScroll>
            <UpTri />
            <VThumb />
            <VDown><DownTri /></VDown>
          </VScroll>
        </SheetArea>

        <SheetTabs>
          <NavArrows>
            <ChevronLeft size={11} color="#8a8a8a" />
            <ChevronRight size={11} color="#8a8a8a" />
          </NavArrows>
          <SheetTab>Munka1</SheetTab>
          <AddSheet><Plus size={11} color="#c8c8c8" strokeWidth={1.2} /></AddSheet>
          <TabSplitter>⋮</TabSplitter>
          <HScroll>
            <LeftTri />
            <HThumb />
            <HRight><RightTri /></HRight>
          </HScroll>
        </SheetTabs>

        <StatusBar>
          Kész
          <StatusItem $ml={36}><AccessIcon /></StatusItem>
          <StatusItem $ml={2}>Akadálymentesség: minden rendben</StatusItem>
          <StatusRight>
            <StatusItem $w={58}>Átlag: 5568,84</StatusItem>
            <StatusItem $w={66}>Cellák száma: 25</StatusItem>
            <StatusItem $w={65}>Összeg: 139221</StatusItem>
            <ViewButton $active><NormalViewIcon /></ViewButton>
            <ViewButton><PageLayoutIcon /></ViewButton>
            <ViewButton><BreakViewIcon /></ViewButton>
            <StatusItem $ml={3}><Minus size={7} color="#ddd" /></StatusItem>
            <ZoomTrack><ZoomTick /><ZoomThumb /></ZoomTrack>
            <StatusItem><Plus size={7} color="#ddd" /></StatusItem>
            <StatusItem $ml={8} $w={18}>205%</StatusItem>
          </StatusRight>
        </StatusBar>
      </Window>
    </Page>
  );
}
